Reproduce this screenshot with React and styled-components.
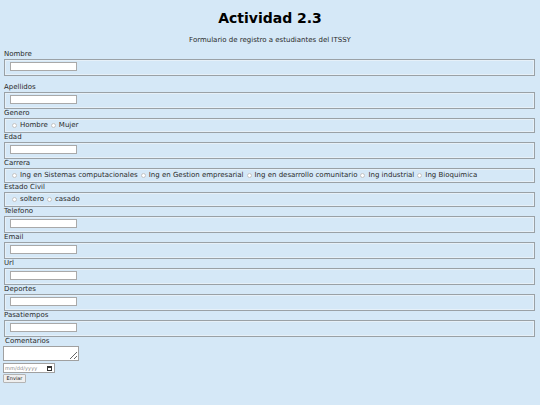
import React from 'react';
import styled, { createGlobalStyle } from 'styled-components';

const Global = createGlobalStyle`
  html, body {
    margin: 0;
    padding: 0;
    background: #d5e8f7;
  }
  body {
    font-family: "DejaVu Sans", Verdana, sans-serif;
    color: #2a2a2a;
  }
`;

const Page = styled.div`
  width: 540px;
  height: 405px;
  padding: 0 4px 0 4px;
  box-sizing: border-box;
  background: #d5e8f7;
  overflow: hidden;
`;

const Title = styled.h1`
  margin: 0;
  padding-top: 9px;
  font-size: 14px;
  line-height: 18px;
  font-weight: bold;
  text-align: center;
  color: #000;
`;

const Subtitle = styled.p`
  margin: 9px 0 0 0;
  font-size: 7px;
  line-height: 9px;
  text-align: center;
`;

const Form = styled.form`
  margin-top: 5px;
  display: flex;
  flex-direction: column;
  align-items: stretch;
`;

const Label = styled.div`
  font-size: 7px;
  line-height: 9px;
  height: 9px;
  margin-top: ${(p) => p.gap || 0}px;
  padding-left: ${(p) => p.indent || 0}px;
`;

const Box = styled.fieldset`
  margin: 0 1px 0 0;
  padding: ${(p) => (p.radio ? '2px 5px 3px' : '2px 5px 4px')};
  border: 1px solid #9aa1a6;
  box-shadow: inset 0 0 0 1px #e6f0f8;
  display: flex;
  align-items: center;
  gap: 3px;
  min-width: 0;
  height: ${(p) => (p.radio ? 15 : 17)}px;
  box-sizing: border-box;
`;

const TextInput = styled.input`
  width: 67px;
  height: 9px;
  padding: 0;
  margin: 0;
  border: 1px solid #a9a9a9;
  background: #fff;
  box-sizing: border-box;
  font-size: 6px;
`;

const Option = styled.label`
  display: inline-flex;
  align-items: center;
  gap: 3px;
  font-size: 7px;
  line-height: 9px;
  margin-left: ${(p) => (p.first ? 2 : 0)}px;
`;

const Dot = styled.span`
  width: 5px;
  height: 5px;
  margin-top: -1px;
  border-radius: 50%;
  border: 1px solid #c4c4c4;
  background: #fff;
  box-sizing: border-box;
  display: inline-block;
`;

const TextArea = styled.textarea`
  width: 76px;
  height: 15px;
  margin: 0 0 2px -1px;
  padding: 0;
  border: 1px solid #a0a0a0;
  background: #fff;
  box-sizing: border-box;
  font-size: 6px;
  resize: both;
`;

const DateBox = styled.div`
  width: 52px;
  height: 10px;
  margin-left: -1px;
  border: 1px solid #a0a0a0;
  background: #fff;
  box-sizing: border-box;
  display: flex;
  align-items: center;
  justify-content: space-between;
  padding: 0 2px 0 1px;
  font-size: 5px;
  color: #888;
  letter-spacing: 0.1px;
`;

const CalIcon = styled.span`
  width: 5px;
  height: 5px;
  border: 1px solid #333;
  border-top-width: 2px;
  box-sizing: border-box;
`;

const Row = styled.div`
  display: flex;
`;

const Button = styled.button`
  margin: 1px 0 0 -1px;
  width: 23px;
  height: 9px;
  padding: 0;
  font-family: "DejaVu Sans", sans-serif;
  font-size: 5px;
  line-height: 7px;
  color: #222;
  background: #efefef;
  border: 1px solid #b4b4b4;
  border-radius: 1px;
`;

const TextField = ({ label, gap }) => (
  <>
    <Label gap={gap}>{label}</Label>
    <Box>
      <TextInput type="text" />
    </Box>
  </>
);

const RadioField = ({ label, options }) => (
  <>
    <Label>{label}</Label>
    <Box radio>
      {options.map((o, i) => (
        <Option key={o} first={i === 0}>
          <Dot />
          {o}
        </Option>
      ))}
    </Box>
  </>
);

export default function App() {
  return (
    <Page>
      <Global />
      <Title>Actividad 2.3</Title>
      <Subtitle>Formulario de registro a estudiantes del ITSSY</Subtitle>
      <Form onSubmit={(e) => e.preventDefault()}>
        <TextField label="Nombre" />
        <TextField label="Apellidos" gap={7} />
        <RadioField label="Genero" options={['Hombre', 'Mujer']} />
        <TextField label="Edad" />
        <RadioField
          label="Carrera"
          options={[
            'Ing en Sistemas computacionales',
            'Ing en Gestion empresarial',
            'Ing en desarrollo comunitario',
            'Ing industrial',
            'Ing Bioquimica',
          ]}
        />
        <RadioField label="Estado Civil" options={['soltero', 'casado']} />
        <TextField label="Telefono" />
        <TextField label="Email" />
        <TextField label="Url" />
        <TextField label="Deportes" />
        <TextField label="Pasatiempos" />
        <Label indent={1}>Comentarios</Label>
        <Row>
          <TextArea />
        </Row>
        <Row>
          <DateBox>
            <span>mm/dd/yyyy</span>
            <CalIcon />
          </DateBox>
        </Row>
        <Row>
          <Button type="submit">Enviar</Button>
        </Row>
      </Form>
    </Page>
  );
}
